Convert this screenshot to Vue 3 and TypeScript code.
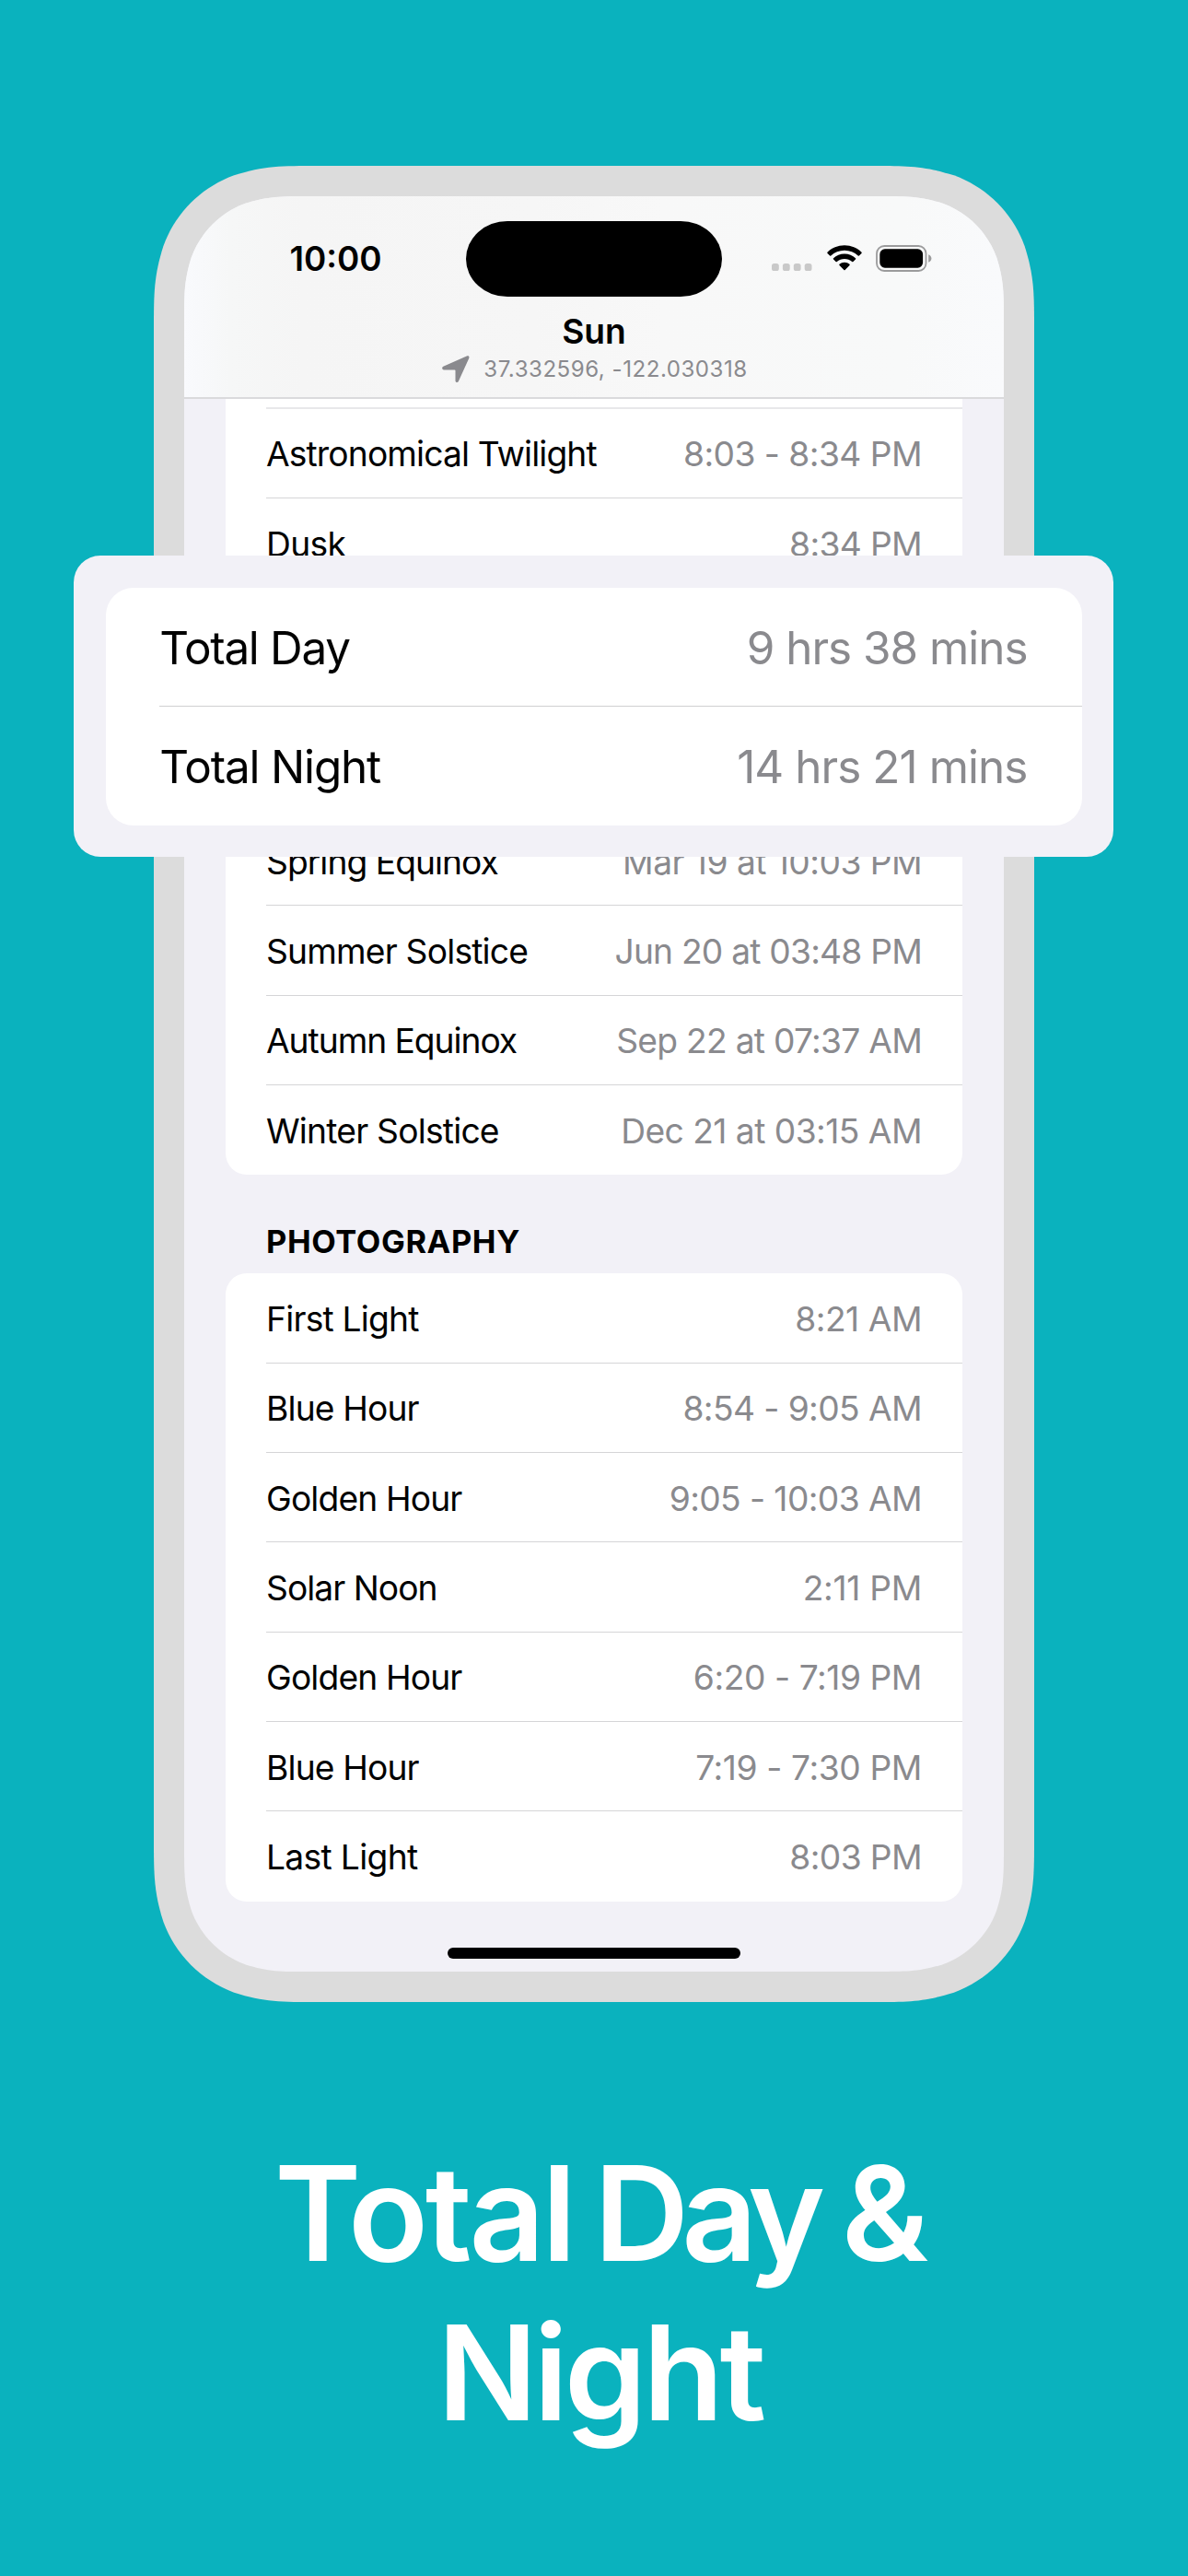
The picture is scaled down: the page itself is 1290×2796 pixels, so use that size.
<script setup lang="ts">
interface Entry {
  label: string
  value: string
  labelTracking?: number
  valueTracking?: number
}

const twilight: Entry[] = [
  { label: 'Astronomical Twilight', value: '8:03 - 8:34 PM', labelTracking: -0.87, valueTracking: -0.55 },
  { label: 'Dusk', value: '8:34 PM', labelTracking: -0.69, valueTracking: -0.65 },
]

const totals: Entry[] = [
  { label: 'Total Day', value: '9 hrs 38 mins', labelTracking: -1.3, valueTracking: -1 },
  { label: 'Total Night', value: '14 hrs 21 mins', labelTracking: -1.15, valueTracking: -0.92 },
]

const seasons: Entry[] = [
  { label: 'Spring Equinox', value: 'Mar 19 at 10:03 PM', labelTracking: -0.96, valueTracking: -0.54 },
  { label: 'Summer Solstice', value: 'Jun 20 at 03:48 PM', labelTracking: -0.79, valueTracking: -0.79 },
  { label: 'Autumn Equinox', value: 'Sep 22 at 07:37 AM', labelTracking: -1.04, valueTracking: -0.74 },
  { label: 'Winter Solstice', value: 'Dec 21 at 03:15 AM', labelTracking: -0.78, valueTracking: -0.54 },
]

const photography: Entry[] = [
  { label: 'First Light', value: '8:21 AM', labelTracking: -0.77, valueTracking: -0.48 },
  { label: 'Blue Hour', value: '8:54 - 9:05 AM' },
  { label: 'Golden Hour', value: '9:05 - 10:03 AM' },
  { label: 'Solar Noon', value: '2:11 PM', labelTracking: -0.95, valueTracking: -0.3 },
  { label: 'Golden Hour', value: '6:20 - 7:19 PM', valueTracking: -0.45 },
  { label: 'Blue Hour', value: '7:19 - 7:30 PM', valueTracking: -0.4 },
  { label: 'Last Light', value: '8:03 PM', labelTracking: -0.67, valueTracking: -0.61 },
]

const tracking = (value: number | undefined, fallback: number) => ({
  letterSpacing: `${value ?? fallback}px`,
})

/** Rounded rectangle with continuous-curvature corners. */
function smoothRect(w: number, h: number, r: number): { clipPath: string } {
  const a = 1.3 * r
  const b = r
  const c = 0.868407 * r
  const d = 0.631494 * r
  const e = 0.074911 * r
  const f = 0.372824 * r
  const g = 0.169059 * r
  const outline = [
    `M${a} 0H${w - a}`,
    `C${w - b} 0 ${w - c} 0 ${w - d} ${e}`,
    `C${w - f} ${g} ${w - g} ${f} ${w - e} ${d}`,
    `C${w} ${c} ${w} ${b} ${w} ${a}`,
    `V${h - a}`,
    `C${w} ${h - b} ${w} ${h - c} ${w - e} ${h - d}`,
    `C${w - g} ${h - f} ${w - f} ${h - g} ${w - d} ${h - e}`,
    `C${w - c} ${h} ${w - b} ${h} ${w - a} ${h}`,
    `H${a}`,
    `C${b} ${h} ${c} ${h} ${d} ${h - e}`,
    `C${f} ${h - g} ${g} ${h - f} ${e} ${h - d}`,
    `C0 ${h - c} 0 ${h - b} 0 ${h - a}`,
    `V${a}`,
    `C0 ${b} 0 ${c} ${e} ${d}`,
    `C${g} ${f} ${f} ${g} ${d} ${e}`,
    `C${c} 0 ${b} 0 ${a} 0Z`,
  ].join('')
  return { clipPath: `path('${outline}')` }
}

const frameShape = smoothRect(956, 1993, 138)
const screenShape = smoothRect(890, 1927, 105)
</script>

<template>
  <main class="poster">
    <div class="phone" :style="frameShape">
      <div class="screen" :style="screenShape">
        <header class="nav">
          <div class="status">
            <span class="time">10:00</span>
            <span class="island"></span>
            <div class="indicators">
              <svg class="dots" width="44" height="8" viewBox="0 0 44 8">
                <rect v-for="n in 4" :key="n" :x="(n - 1) * 11.9" y="0" width="7.8" height="8" rx="2.6" fill="#c9c9c9" />
              </svg>
              <svg class="wifi" width="38" height="28" viewBox="0 0 38 28">
                <path d="M19 .3C26.200.3 32.800 3.100 37.500 7.700C37.900 8.100 37.900 8.500 37.500 8.900L34.900 11.500C34.500 11.900 34.100 11.900 33.700 11.500C29.800 7.800 24.700 5.700 19 5.700S8.200 7.800 4.300 11.500C3.900 11.900 3.500 11.900 3.100 11.500L.5 8.900C.1 8.500.1 8.100.5 7.700C5.200 3.100 11.800.3 19 .3Z" />
                <path d="M19 9.500C23.600 9.500 27.800 11.300 31 14.200C31.400 14.600 31.400 15 31 15.400L28.400 18C28 18.400 27.600 18.400 27.200 18C25 16.100 22.100 14.900 19 14.900S13 16.100 10.800 18C10.400 18.400 10 18.400 9.600 18L7 15.400C6.600 15 6.600 14.600 7 14.200C10.200 11.300 14.400 9.500 19 9.500Z" />
                <path d="M19 18.700C21.100 18.700 23 19.500 24.500 20.700C24.900 21.100 24.900 21.500 24.500 21.900L19.600 26.900C19.200 27.300 18.800 27.300 18.400 26.900L13.500 21.900C13.100 21.500 13.100 21.100 13.500 20.700C15 19.500 16.900 18.700 19 18.700Z" />
              </svg>
              <svg class="battery" width="61" height="29" viewBox="0 0 61 29">
                <rect x="1" y="1" width="53.500" height="27" rx="8.200" fill="none" stroke="#9b9b9c" stroke-width="1.800" />
                <rect x="4.300" y="4.300" width="46.800" height="20.400" rx="5.600" />
                <path d="M57.200 10.200C59.300 11 60.400 12.500 60.400 14.500S59.300 18 57.200 18.800Z" fill="#9b9b9c" />
              </svg>
            </div>
          </div>
          <h1 class="title">Sun</h1>
          <p class="place">
            <svg class="arrow" width="30" height="30" viewBox="0 0 30 30">
              <path d="M1.300 11.700L26.800.5C28.800-.3 30 .9 29.200 2.900L17.800 27.900C17.100 29.600 14.500 29.300 14.500 27.200V16.200C14.500 15.700 14.200 15.500 13.700 15.500L2.100 15.400C-.1 15.300-.5 12.500 1.300 11.700Z" fill="#8a8a8e" />
            </svg>
            <span>37.332596, -122.030318</span>
          </p>
        </header>

        <ul class="card card-scrolled">
          <li class="stub"></li>
          <li v-for="row in twilight" :key="row.label" class="row">
            <span :style="tracking(row.labelTracking, -0.85)">{{ row.label }}</span>
            <span class="value" :style="tracking(row.valueTracking, -0.6)">{{ row.value }}</span>
          </li>
        </ul>

        <ul class="card card-seasons">
          <li v-for="row in seasons" :key="row.label" class="row">
            <span :style="tracking(row.labelTracking, -0.85)">{{ row.label }}</span>
            <span class="value" :style="tracking(row.valueTracking, -0.6)">{{ row.value }}</span>
          </li>
        </ul>

        <h2 class="section">PHOTOGRAPHY</h2>

        <ul class="card">
          <li v-for="(row, i) in photography" :key="i" class="row">
            <span :style="tracking(row.labelTracking, -0.85)">{{ row.label }}</span>
            <span class="value" :style="tracking(row.valueTracking, -0.6)">{{ row.value }}</span>
          </li>
        </ul>

        <div class="home"></div>
      </div>
    </div>

    <section class="callout">
      <ul class="totals">
        <li v-for="row in totals" :key="row.label" class="total">
          <span :style="tracking(row.labelTracking, -1.3)">{{ row.label }}</span>
          <span class="value" :style="tracking(row.valueTracking, -1)">{{ row.value }}</span>
        </li>
      </ul>
    </section>

    <div class="headline">
      <div class="line">
        <span class="word-total">Total</span>
        <span class="word-day">Day</span>
        <span class="word-and">&amp;</span>
      </div>
      <div class="line line-second">
        <span class="word-night">Night</span>
      </div>
    </div>
  </main>
</template>

<style>
body {
  margin: 0;
  background: #0ab2be;
}
</style>

<style scoped>
.poster {
  position: relative;
  box-sizing: border-box;
  width: 1290px;
  height: 2796px;
  padding-top: 180px;
  overflow: hidden;
  background: #0ab2be;
  color: #000;
  font-family: Inter, 'Liberation Sans', sans-serif;
}

.phone {
  box-sizing: border-box;
  width: 956px;
  height: 1993px;
  margin: 0 auto;
  padding: 33px;
  background: #dcdcdc;
}

.screen {
  display: flex;
  flex-direction: column;
  width: 890px;
  height: 1927px;
  background: #f2f1f7;
}

.nav {
  box-sizing: border-box;
  flex: none;
  height: 220px;
  padding-top: 27px;
  border-bottom: 2px solid #dadadc;
  background: linear-gradient(90deg, #f9fafd 0, #f6f7f7 50px, #f5f5f5 130px, #f6f6f6 380px, #f8f8f8 520px, #f8f9f9 780px, #f9fafc 890px);
}

.status {
  display: grid;
  grid-template-columns: 306px 278px 306px;
  align-items: center;
  height: 82px;
}

.time {
  padding-left: 114.5px;
  font-size: 36.8px;
  font-weight: 600;
  line-height: 44px;
}

.island {
  height: 82px;
  border-radius: 45px / 41px;
  background: #000;
}

.indicators {
  display: flex;
  align-items: center;
  padding-left: 54px;
}

.indicators svg {
  display: block;
}

.dots {
  margin-top: 18px;
}

.wifi {
  margin: -2px 0 0 15.5px;
}

.battery {
  margin: -2px 0 0 15.5px;
}

.title {
  margin: 16px 0 0;
  font-size: 37.2px;
  font-weight: 600;
  line-height: 44px;
  letter-spacing: -0.1px;
  text-align: center;
}

.place {
  display: flex;
  align-items: center;
  justify-content: center;
  gap: 15px;
  height: 28px;
  margin: 5px 0 0;
  padding-left: 2px;
  color: #8a8a8e;
  font-size: 24.1px;
  line-height: 28px;
  letter-spacing: 0.51px;
}

.arrow {
  display: block;
}

.card,
.totals {
  margin: 0;
  padding: 0;
  list-style: none;
  background: #fff;
}

.card {
  flex: none;
  margin: 0 45px;
  border-radius: 23px;
}

.card-scrolled {
  border-radius: 0 0 23px 23px;
}

.card-seasons {
  margin-top: 247.4px;
}

.stub {
  box-sizing: border-box;
  height: 10.8px;
  margin-left: 44px;
  border-bottom: 2px solid #e8e8ea;
}

.row {
  box-sizing: border-box;
  display: flex;
  align-items: center;
  justify-content: space-between;
  height: 97.38px;
  margin-left: 44px;
  padding: 2px 44px 0 0;
  border-bottom: 1px solid #d5d5d7;
  font-size: 37.2px;
  white-space: nowrap;
}

.row:last-child {
  padding-top: 1px;
  border-bottom: 0;
}

.value {
  color: #8a8a8e;
}

.section {
  box-sizing: border-box;
  flex: none;
  height: 106.8px;
  margin: 0;
  padding: 51.5px 0 0 89px;
  font-size: 34.4px;
  font-weight: 650;
  line-height: 42px;
  letter-spacing: 0.64px;
}

.home {
  flex: none;
  width: 318px;
  height: 12px;
  margin: 50px auto 0;
  border-radius: 6px;
  background: #000;
}

.callout {
  position: absolute;
  top: 603px;
  left: 80px;
  box-sizing: border-box;
  width: 1129px;
  height: 327px;
  padding: 34.6px 34.5px 0 35px;
  border-radius: 29px;
  background: #f2f1f7;
}

.totals {
  border-radius: 30px;
}

.total {
  box-sizing: border-box;
  display: flex;
  align-items: center;
  justify-content: space-between;
  height: 129px;
  margin-left: 58.3px;
  padding: 2px 59px 0 0;
  font-size: 49.4px;
  white-space: nowrap;
}

.total:first-child {
  border-bottom: 1px solid #cfcfd1;
}

.headline {
  margin-top: 141.5px;
  color: #fff;
  font-size: 143px;
  font-weight: 580;
  line-height: 173px;
}

.line {
  display: flex;
  justify-content: center;
  padding-left: 16.5px;
}

.line-second {
  padding-left: 13px;
}

.word-total {
  letter-spacing: -3.3px;
}

.word-day {
  margin: 0 25.5px 0 22.5px;
  letter-spacing: -8px;
}

.word-night {
  letter-spacing: -4.1px;
}
</style>
